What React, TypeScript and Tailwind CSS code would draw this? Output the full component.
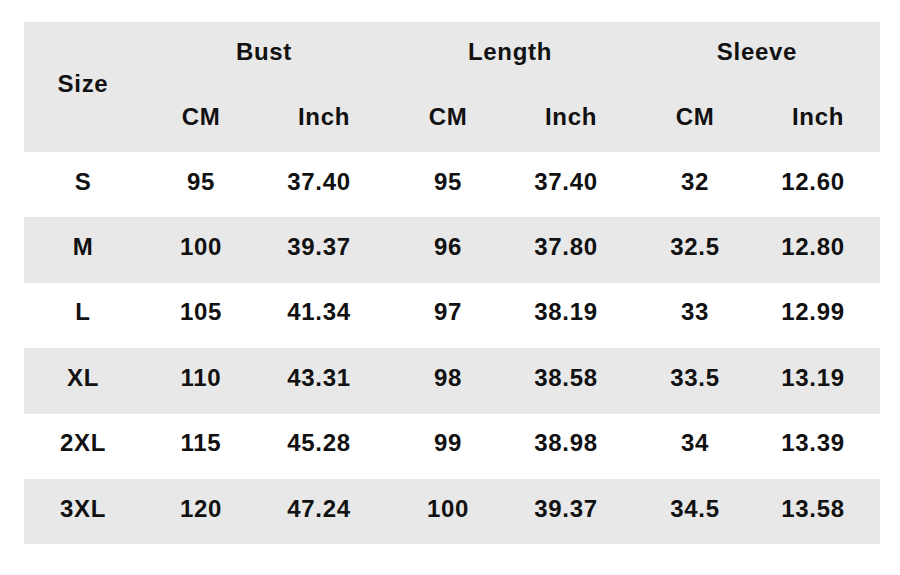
import React from "react";

const rows = [
  ["S", "95", "37.40", "95", "37.40", "32", "12.60"],
  ["M", "100", "39.37", "96", "37.80", "32.5", "12.80"],
  ["L", "105", "41.34", "97", "38.19", "33", "12.99"],
  ["XL", "110", "43.31", "98", "38.58", "33.5", "13.19"],
  ["2XL", "115", "45.28", "99", "38.98", "34", "13.39"],
  ["3XL", "120", "47.24", "100", "39.37", "34.5", "13.58"],
];

const cols = "grid grid-cols-[118px_118px_118px_129px_118px_129px_126px]";
// small nudges so each column's text lands where it does in the chart
const pad = ["", "", "", "pl-[11px]", "", "pl-[11px]", "pr-[8px]"];
const headPad = ["", "", "pl-[10px]", "pl-[11px]", "pl-[10px]", "pl-[11px]", "pl-[2px]"];

const App = () => {
  return (
    <div className="w-[900px] h-[575px] bg-white pt-[22px] pl-[24px] font-['Liberation_Sans',Arial,sans-serif] font-bold text-[24px] tracking-[0.7px] text-[#111]">
      <div className="w-[856px]">
        <div className={`${cols} grid-rows-[65px_65px] bg-[#e8e8e8]`}>
          <div className="row-span-2 flex items-center justify-center pb-[6px]">Size</div>
          <div className="col-span-2 flex items-center justify-center pb-[6px] pl-[8px]">Bust</div>
          <div className="col-span-2 flex items-center justify-center pb-[6px] pl-[17px]">Length</div>
          <div className="col-span-2 flex items-center justify-center pb-[6px] pl-[9px]">Sleeve</div>
          {["CM", "Inch", "CM", "Inch", "CM", "Inch"].map((h, i) => (
            <div key={i} className={`flex items-center justify-center pb-[6px] ${headPad[i + 1]}`}>
              {h}
            </div>
          ))}
        </div>
        {rows.map((r, i) => (
          <div
            key={r[0]}
            className={`${cols} h-[65.4px] ${i % 2 === 1 ? "bg-[#e8e8e8]" : "bg-white"}`}
          >
            {r.map((c, j) => (
              <div key={j} className={`flex items-center justify-center pb-[6px] ${pad[j]}`}>
                {c}
              </div>
            ))}
          </div>
        ))}
      </div>
    </div>
  );
};

export default App;
